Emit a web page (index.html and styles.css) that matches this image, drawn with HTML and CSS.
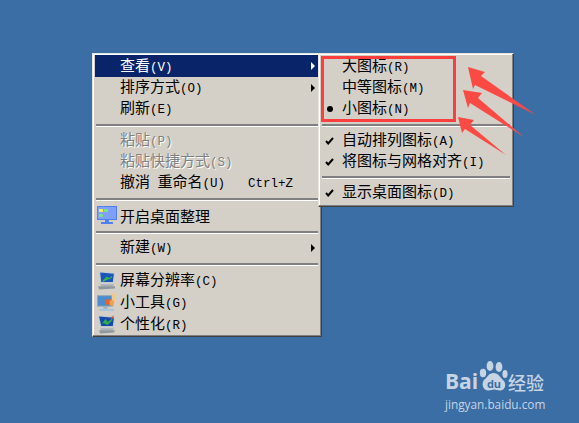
FILE: index.html
```html
<!DOCTYPE html>
<html lang="zh">
<head>
<meta charset="utf-8">
<title>桌面右键菜单</title>
<link rel="stylesheet" href="styles.css">
</head>
<body>
<main class="desktop">
  <nav class="menu menu-main">
    <div class="row tall active"><span class="icon"></span><span class="label">查看<span class="lat">(V)</span></span><span class="arrow"></span></div>
    <div class="row"><span class="icon"></span><span class="label">排序方式<span class="lat">(O)</span></span><span class="arrow"></span></div>
    <div class="row"><span class="icon"></span><span class="label">刷新<span class="lat">(E)</span></span></div>
    <div class="sep"></div>
    <div class="row disabled"><span class="icon"></span><span class="label">粘贴<span class="lat">(P)</span></span></div>
    <div class="row disabled"><span class="icon"></span><span class="label">粘贴快捷方式<span class="lat">(S)</span></span></div>
    <div class="row"><span class="icon"></span><span class="label">撤消<span class="lat"> </span>重命名<span class="lat">(U)</span><span class="lat shortcut">Ctrl+Z</span></span></div>
    <div class="sep"></div>
    <div class="row tall">
      <span class="icon">
        <svg width="20" height="18" viewBox="0 0 20 18"><rect x="0" y="0" width="20" height="14" fill="#4f7ff0"/><rect x="1" y="1" width="18" height="12" fill="#7f9ffb"/><rect x="2" y="3" width="4" height="3" fill="#f5ee5a"/><rect x="7" y="3" width="4" height="3" fill="#7ee08a"/><rect x="2" y="8" width="4" height="3" fill="#7ee08a"/><rect x="8" y="14" width="4" height="2" fill="#4f7ff0"/><rect x="4" y="16" width="12" height="2" fill="#4f7ff0"/></svg>
      </span>
      <span class="label">开启桌面整理</span>
    </div>
    <div class="sep"></div>
    <div class="row"><span class="icon"></span><span class="label">新建<span class="lat">(W)</span></span><span class="arrow"></span></div>
    <div class="sep"></div>
    <div class="row tall">
      <span class="icon">
        <svg width="19" height="20" viewBox="0 0 18 18"><path d="M2 1 17 2 16 12 3 12Z" fill="#c4ccd4"/><path d="M3 2 16 3 15 11 4 11Z" fill="#1c55b8"/><path d="M5 10 9 6 12 7 14 5 14 7 9 9 6 11Z" fill="#39b54a"/><path d="M3 13 16 13 15 15 4 15Z" fill="#a8b0b8"/><path d="M1 15 17 15 17 17 2 18Z" fill="#8e969e"/></svg>
      </span>
      <span class="label">屏幕分辨率<span class="lat">(C)</span></span>
    </div>
    <div class="row tall">
      <span class="icon">
        <svg width="19" height="19" viewBox="0 0 18 18"><rect x="0" y="2" width="15" height="11" fill="#8fa6b8"/><rect x="1" y="3" width="13" height="9" fill="#4a8ccc"/><rect x="8" y="6" width="5" height="5" fill="#e8622c"/><rect x="14" y="0" width="3" height="9" fill="#f3c98a"/><rect x="12" y="7" width="4" height="5" fill="#f0a050"/><rect x="6" y="13" width="4" height="2" fill="#9cb0c0"/><rect x="2" y="15" width="14" height="2" fill="#a8c4d8"/></svg>
      </span>
      <span class="label">小工具<span class="lat">(G)</span></span>
    </div>
    <div class="row tall">
      <span class="icon">
        <svg width="19" height="20" viewBox="0 0 18 18"><path d="M1 1 17 2 16 12 3 12Z" fill="#c0c8ce"/><path d="M2 2 16 3 15 11 4 11Z" fill="#164aa8"/><path d="M4 10 8 4 10 7 13 5 16 1 14 6 10 10 6 8Z" fill="#2fae4a"/><path d="M13 3 16 1 14 5Z" fill="#d8402c"/><path d="M3 13 16 13 15 15 4 15Z" fill="#a8b0b8"/><path d="M2 15 17 15 16 17 3 18Z" fill="#8e969e"/></svg>
      </span>
      <span class="label">个性化<span class="lat">(R)</span></span>
    </div>
  </nav>

  <nav class="menu menu-sub">
    <div class="row tall"><span class="icon"></span><span class="label">大图标<span class="lat">(R)</span></span></div>
    <div class="row"><span class="icon"></span><span class="label">中等图标<span class="lat">(M)</span></span></div>
    <div class="row"><span class="icon"><span class="dot"></span></span><span class="label">小图标<span class="lat">(N)</span></span></div>
    <div class="sep"></div>
    <div class="row"><span class="icon"><svg class="check" width="9" height="8" viewBox="0 0 9 8"><path d="M1 4 3.2 6.5 8 1" fill="none" stroke="#000" stroke-width="2"/></svg></span><span class="label">自动排列图标<span class="lat">(A)</span></span></div>
    <div class="row"><span class="icon"><svg class="check" width="9" height="8" viewBox="0 0 9 8"><path d="M1 4 3.2 6.5 8 1" fill="none" stroke="#000" stroke-width="2"/></svg></span><span class="label">将图标与网格对齐<span class="lat">(I)</span></span></div>
    <div class="sep short"></div>
    <div class="row"><span class="icon"><svg class="check" width="9" height="8" viewBox="0 0 9 8"><path d="M1 4 3.2 6.5 8 1" fill="none" stroke="#000" stroke-width="2"/></svg></span><span class="label">显示桌面图标<span class="lat">(D)</span></span></div>
  </nav>

  <div class="highlight-box"></div>
  <svg class="arrows" width="579" height="423" viewBox="0 0 579 423">
    <path d="M468 67 485 72 481 76 536 115 475 85 473 89Z" fill="#fb4a44"/>
    <path d="M463 90 482 93 478 98 524 137 470 103 468 108Z" fill="#fb4a44"/>
    <path d="M458 117 474 120 470 125 506 155 465 129 462 133Z" fill="#fb4a44"/>
  </svg>

  <div class="logo">
    <div class="logo-top">
      <span class="logo-bai">Bai</span>
      <span class="paw">
        <svg width="29" height="32" viewBox="0 0 29 32"><ellipse cx="4" cy="13" rx="3.2" ry="4.2" fill="#c6d4e4"/><ellipse cx="11" cy="6" rx="3.4" ry="5" fill="#c6d4e4"/><ellipse cx="20" cy="7" rx="3.4" ry="5" fill="#c6d4e4"/><ellipse cx="26" cy="14" rx="2.6" ry="4" fill="#c6d4e4"/><path d="M14.5 13C10 13 8.500 17 6 19 2 22 3 30 9 30.500 12 30.700 13 29.500 15 29.500 17 29.500 19 30.700 21.500 30.500 27 30 27.500 23 24 20 21 17.500 19.500 13 14.500 13Z" fill="#c6d4e4"/></svg>
        <span class="paw-du">du</span>
      </span>
      <span class="logo-jy">经验</span>
    </div>
    <div class="logo-url">jingyan.baidu.com</div>
  </div>
</main>
</body>
</html>
```
FILE: styles.css
```css
* { box-sizing: border-box; }
html, body { margin: 0; padding: 0; }
body { width: 579px; height: 423px; overflow: hidden; background: #3a6ea5; }
.desktop { position: relative; width: 579px; height: 423px; font-family: "Noto Sans CJK SC", sans-serif; font-size: 15px; color: #000; }

.menu {
  position: absolute;
  top: 53px;
  display: flex;
  flex-direction: column;
  padding: 1px 2px 2px;
  background: #d4d0c8;
  border: 1px solid;
  border-color: #e8e6e0 #404040 #404040 #e8e6e0;
  box-shadow: inset -1px -1px 0 #808080, inset 1px 1px 0 #ffffff;
}
.menu-main { left: 92px; width: 230px; height: 284px; }
.menu-sub { left: 318px; width: 196px; height: 154px; }

.row { display: flex; align-items: center; height: 21px; flex: none; line-height: 21px; white-space: pre; }
.row.tall { height: 22px; }
.row.active { background: #0a246a; color: #fff; }
.row.disabled { color: #808080; text-shadow: 1px 1px 0 #fff; }

.icon { display: flex; align-items: center; justify-content: center; width: 25px; height: 100%; flex: none; padding-right: 2px; }
.label { flex: 1; }
.lat { font-family: "Liberation Mono", monospace; font-size: 12.5px; }
.shortcut { margin-left: 23px; }

.arrow { width: 0; height: 0; margin-right: 4px; border-left: 4px solid #000; border-top: 4px solid transparent; border-bottom: 4px solid transparent; }
.active .arrow { border-left-color: #fff; }

.sep { height: 11px; flex: none; padding-top: 5px; }
.sep::before { content: ""; display: block; height: 2px; margin: 0 1px; background: #808080; border-bottom: 1px solid #fff; }
.sep.short { height: 10px; padding-top: 4px; }

.menu-sub .icon { width: 21px; padding: 0 0 0 4px; justify-content: flex-start; }
.dot { display: block; width: 6px; height: 6px; margin-left: 2px; border-radius: 50%; background: #000; }

.highlight-box { position: absolute; left: 321px; top: 56px; width: 135px; height: 66px; border: 3px solid #fb3f3f; }
.arrows { position: absolute; left: 0; top: 0; }

.logo { position: absolute; left: 445px; top: 360px; color: #c6d4e4; }
.logo-top { display: flex; align-items: flex-end; height: 32px; }
.logo-bai { font-family: "Open Sans", sans-serif; font-weight: 700; font-size: 21px; line-height: 21px; width: 34px; }
.paw { position: relative; display: block; width: 29px; height: 32px; }
.paw svg { display: block; }
.paw-du { position: absolute; left: 6px; bottom: 2px; width: 18px; text-align: center; font-family: "Open Sans", sans-serif; font-weight: 700; font-size: 11px; line-height: 13px; color: #3a6ea5; }
.logo-jy { font-size: 18px; line-height: 20px; font-weight: 500; }
.logo-url { margin-top: 5px; font-family: "Open Sans", sans-serif; font-size: 11.8px; line-height: 14px; white-space: nowrap; }
```
